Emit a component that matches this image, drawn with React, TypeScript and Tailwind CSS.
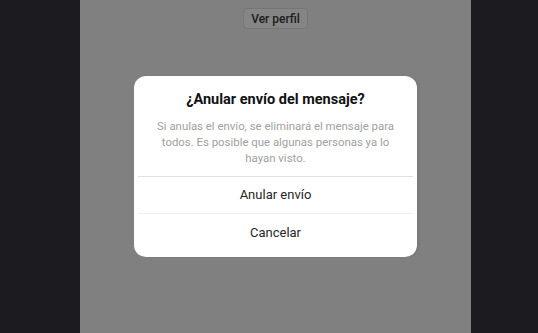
export default function App() {
  return (
    <div className="flex h-[333px] w-[538px] bg-[#1c1b20] font-['Roboto','Liberation_Sans',sans-serif]">
      <div className="ml-[80px] w-[391px] relative bg-[#808080]">
        <div className="flex justify-center pt-[8px]">
          <button className="h-[21px] rounded-[4px] border border-[#767676] bg-[#858585] px-[7px] text-[12px] font-medium text-[#1c1c1c]">
            Ver perfil
          </button>
        </div>

        {/* dialog */}
        <div className="absolute left-[54px] top-[76px] w-[283px] rounded-[12px] bg-white shadow-[2px_0_3px_rgba(0,0,0,0.06)]">
          <div className="px-[18px] pt-[14px] pb-[10px] text-center">
            <h2 className="text-[14.5px] leading-[20px] font-bold text-[#111]">¿Anular envío del mensaje?</h2>
            <p className="mt-[8px] text-[11.4px] leading-[16px] text-[#a0a0a0]">
              Si anulas el envío, se eliminará el mensaje para todos. Es posible que algunas personas ya lo hayan visto.
            </p>
          </div>
          <div className="mx-[4px] h-px bg-[#e0e0e0]" />
          <button className="flex h-[36px] w-full items-center justify-center text-[13px] text-[#262626]">Anular envío</button>
          <div className="mx-[4px] h-px bg-[#f0f0f0]" />
          <button className="flex h-[38px] w-full items-center justify-center text-[13px] text-[#262626]">Cancelar</button>
          <div className="h-[5px]" />
        </div>
      </div>
    </div>
  )
}
